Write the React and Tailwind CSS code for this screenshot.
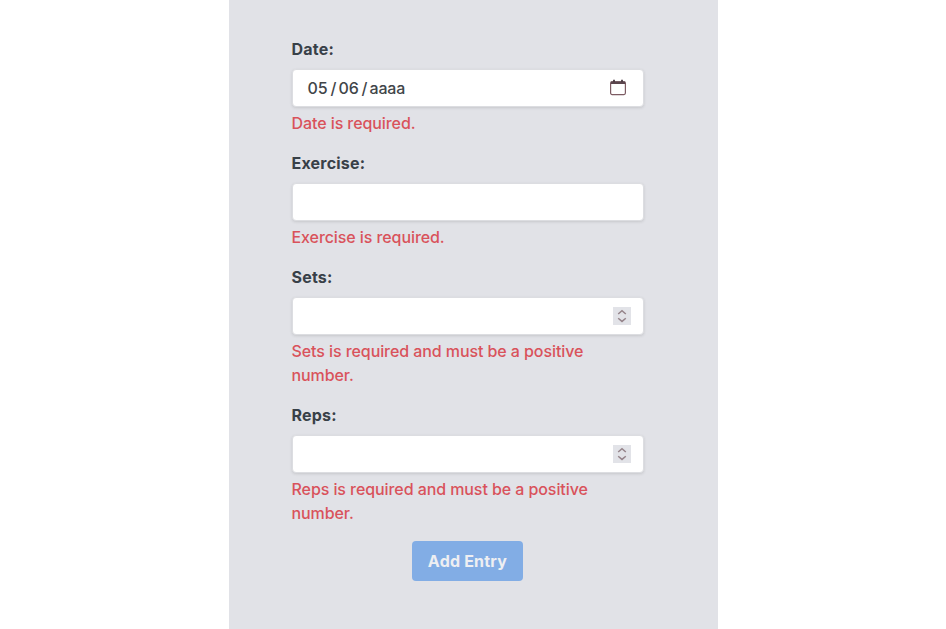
const inputBox =
  "mt-2 flex h-[38px] w-full items-center rounded-[4px] border border-[#dcdde1] bg-white shadow-[0_1px_3px_rgba(0,0,0,0.12)]";

function Field({ label, error, children }) {
  return (
    <div className="mb-4">
      <label className="block text-[16px] font-bold leading-6 tracking-[0.2px] text-[#384048]">{label}</label>
      {children}
      <p className="mt-1 text-[16px] font-medium leading-6 tracking-[-0.08px] text-[#d9525b]">{error}</p>
    </div>
  );
}

function Stepper() {
  return (
    <svg className="ml-auto mr-3" width="18" height="18" viewBox="0 0 18 18" fill="none">
      <rect width="18" height="18" fill="#e2e3e8" />
      <path d="M5.2 7 9 3.8 12.8 7M5.2 11.2 9 14.4 12.8 11.2" stroke="#95848a" strokeWidth="1.5" />
    </svg>
  );
}

function CalendarIcon() {
  return (
    <svg className="ml-auto mr-4" width="18" height="18" viewBox="0 0 18 18" fill="none">
      <rect x="1.6" y="2.8" width="14.8" height="12.8" rx="1.5" stroke="#7d5c63" strokeWidth="1.2" />
      <path d="M1.8 3.7H16.2" stroke="#5b464d" strokeWidth="2.6" />
      <path d="M5 0.8V3M13 0.8V3" stroke="#493940" strokeWidth="1.8" />
    </svg>
  );
}

export default function App() {
  return (
    <div className="flex h-[629px] w-[946px] justify-center overflow-hidden bg-white font-['Inter',sans-serif]">
      <div className="h-full w-[489px] bg-[#e1e2e7] pl-[63px] pr-[74px] pt-[37px]">
        <Field label="Date:" error="Date is required.">
          <div className={inputBox}>
            <div className="ml-[15px] flex text-[16px] font-medium leading-6 text-[#414549]">
              <span className="w-[23px] tracking-[-0.2px]">05</span>
              <span className="w-2">/</span>
              <span className="w-[23px] tracking-[-0.2px]">06</span>
              <span className="w-2">/</span>
              <span className="tracking-[-0.2px]">aaaa</span>
            </div>
            <CalendarIcon />
          </div>
        </Field>
        <Field label="Exercise:" error="Exercise is required.">
          <div className={inputBox} />
        </Field>
        <Field label="Sets:" error="Sets is required and must be a positive number.">
          <div className={inputBox}><Stepper /></div>
        </Field>
        <Field label="Reps:" error="Reps is required and must be a positive number.">
          <div className={inputBox}><Stepper /></div>
        </Field>
        <div className="flex justify-center">
          <button className="h-10 w-[111px] rounded-[4px] bg-[#82ade5] text-[16px] font-bold tracking-[0.2px] text-[#eeeff2]">Add Entry</button>
        </div>
      </div>
    </div>
  );
}
